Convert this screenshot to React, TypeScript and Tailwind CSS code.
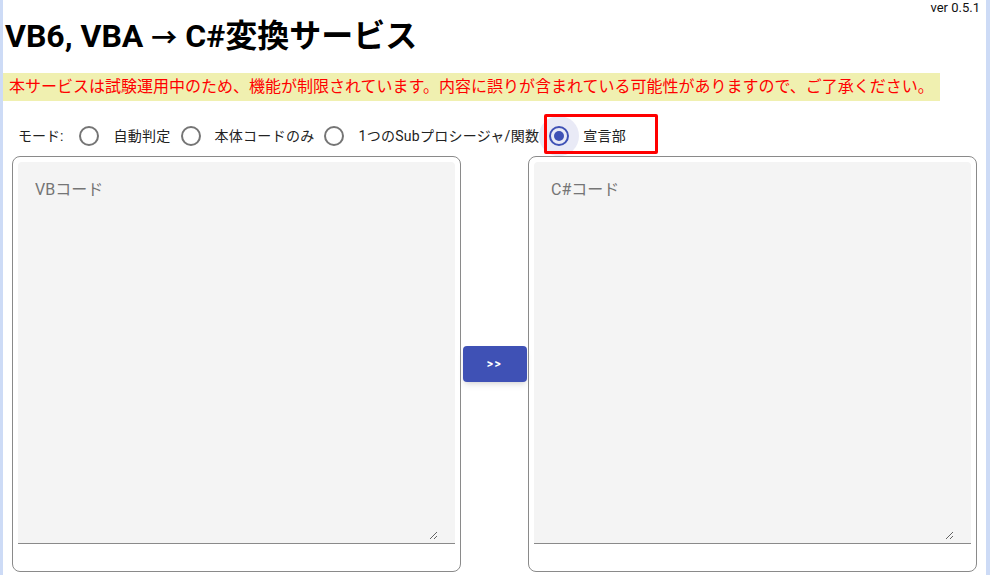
import React from "react";

const font = { fontFamily: 'Roboto, "Noto Sans CJK JP", sans-serif' };

type Opt = { id: string; label: string };

const options: Opt[] = [
  { id: "auto", label: "自動判定" },
  { id: "body", label: "本体コードのみ" },
  { id: "sub", label: "1つのSubプロシージャ/関数" },
  { id: "decl", label: "宣言部" },
];

function Radio({ opt, checked }: { opt: Opt; checked: boolean }) {
  return (
    <label className="flex items-center h-[40px] cursor-pointer">
      <span className="relative flex items-center justify-center w-[40px] h-[40px]">
        {checked && <span className="absolute inset-0 rounded-full bg-[#e9eaf6]" />}
        <span
          className={`relative flex items-center justify-center w-[20px] h-[20px] rounded-full border-2 ${
            checked ? "border-[#3f51b5]" : "border-[#757575]"
          }`}
        >
          {checked && <span className="w-[10px] h-[10px] rounded-full bg-[#3f51b5]" />}
        </span>
      </span>
      <span className="pl-[4px] text-[14px] tracking-[0.02em] text-[#222]">{opt.label}</span>
    </label>
  );
}

function CodePanel({ placeholder }: { placeholder: string }) {
  return (
    <div className="flex flex-col w-[449px] h-[416px] border border-[#8a8a8a] rounded-lg p-[5px] pb-0">
      <div className="flex flex-col h-[382px] bg-[#f4f4f4] rounded-t border-b border-[#8a8a8a] px-[17px] pt-[16px] pb-[3px]">
        <textarea
          placeholder={placeholder}
          className="flex-1 w-full bg-transparent outline-none text-[16px] leading-[24px] text-[#222] placeholder:text-[#757575]"
          style={font}
        />
      </div>
    </div>
  );
}

export default function App() {
  const selected = "decl";
  return (
    <div className="flex w-[990px] h-[575px] bg-white overflow-hidden" style={font}>
      <div className="w-[3px] bg-[#cddbf6]" />
      <div className="relative flex flex-col flex-1">
        <div className="h-[16px] pr-[6px] text-right text-[13px] leading-[16px] text-[#111]">ver 0.5.1</div>
        <h1 className="mt-[1px] h-[38px] pl-[2px] text-[32px] leading-[38px] font-bold text-black">
          VB6, VBA <span className="text-[26px]">→</span> C#変換サービス
        </h1>
        <div className="mt-[18px] self-start h-[28px] px-[6px] bg-[#f0f0b0] text-[16px] leading-[28px] text-[#ff0000]">
          本サービスは試験運用中のため、機能が制限されています。内容に誤りが含まれている可能性がありますので、ご了承ください。
        </div>
        <div className="mt-[15px] flex items-center h-[40px] pl-[15px]">
          <span className="text-[14px] text-[#222] mr-[6px]">モード:</span>
          {options.map((o) => (
            <Radio key={o.id} opt={o} checked={o.id === selected} />
          ))}
        </div>
        <div className="flex items-center px-[9px]">
          <CodePanel placeholder="VBコード" />
          <div className="flex-1 flex justify-center">
            <button className="w-[64px] h-[36px] rounded bg-[#3f51b5] text-white text-[12px] font-bold tracking-[0.12em] shadow-md">
              &gt;&gt;
            </button>
          </div>
          <CodePanel placeholder="C#コード" />
        </div>
        <div className="absolute left-[541px] top-[114px] w-[114px] h-[40px] border-[3px] border-[#ff0000] rounded-[2px] pointer-events-none" />
      </div>
      <div className="w-[4px] bg-[#cddbf6]" />
    </div>
  );
}
